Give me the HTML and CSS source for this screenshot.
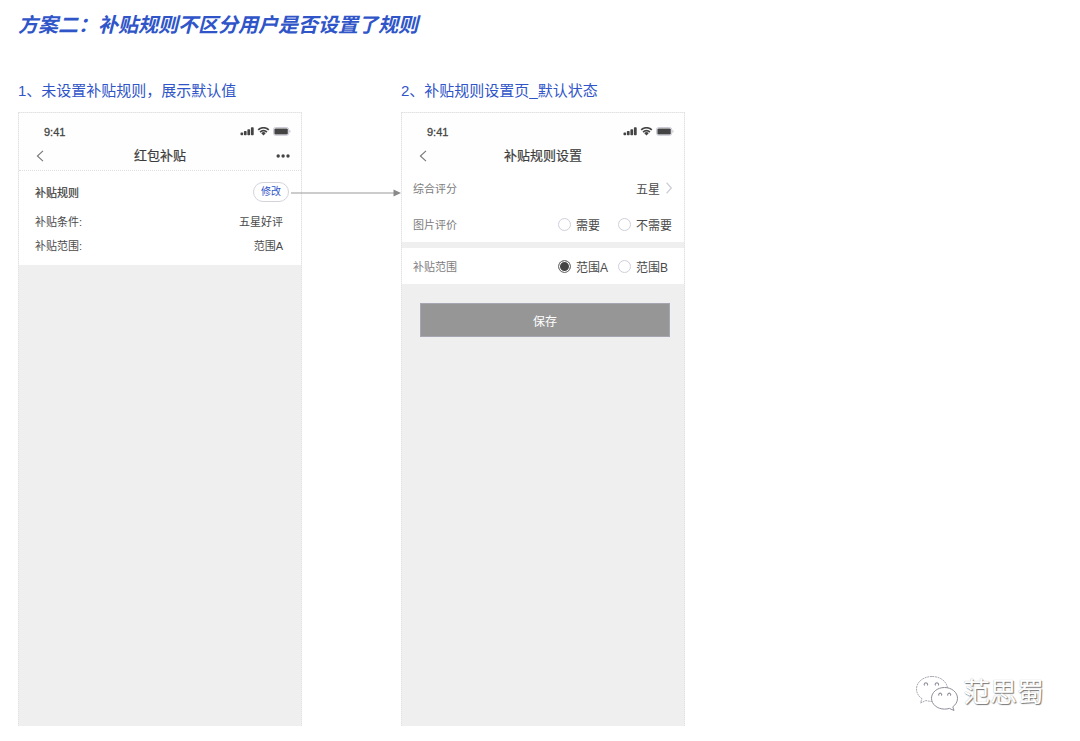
FILE: index.html
```html
<!DOCTYPE html>
<html lang="zh-CN">
<head>
<meta charset="utf-8">
<meta name="viewport" content="width=device-width, initial-scale=1">
<title>方案二</title>
<link rel="stylesheet" href="styles.css">
</head>
<body>
<svg class="sprite" aria-hidden="true">
  <symbol id="status" viewBox="0 0 51 10">
    <g fill="#444">
      <rect x="0.5" y="5.4" width="2.6" height="2.8" rx="0.7"/>
      <rect x="3.9" y="4" width="2.7" height="4.200" rx="0.7"/>
      <rect x="7.4" y="2.300" width="2.7" height="5.900" rx="0.7"/>
      <rect x="10.900" y="0.2" width="2.8" height="8" rx="0.7"/>
      <path d="M23.500 8.500 21.300 6.300a3 3 0 0 1 4.400 0z"/>
      <rect x="34.400" y="1.400" width="13.400" height="6" rx="1.200"/>
    </g>
    <path d="M18.200 2.900a7.600 7.600 0 0 1 10.600 0M20.100 5.100a4.800 4.800 0 0 1 6.800 0" fill="none" stroke="#444" stroke-width="1.700"/>
    <rect x="33.500" y="0.500" width="15.200" height="7.800" rx="2" fill="none" stroke="#c4c4d2" stroke-width="0.900"/>
    <path d="M49.500 3v2.800q1-.4 1-1.400t-1-1.400z" fill="#b5b5c2"/>
  </symbol>
  <symbol id="back" viewBox="0 0 8 12">
    <path d="M7 .8 1.400 6 7 11.200" fill="none" stroke="#777" stroke-width="1.100"/>
  </symbol>
</svg>

<h1 class="title">方案二：补贴规则不区分用户是否设置了规则</h1>

<main class="board">
  <section class="step">
    <h2 class="caption">1、未设置补贴规则，展示默认值</h2>
    <div class="phone">
      <header class="header">
        <div class="status"><span>9:41</span><svg class="status-icons"><use href="#status"/></svg></div>
        <div class="nav">
          <button class="icon-button" aria-label="返回"><svg class="back-icon"><use href="#back"/></svg></button>
          <h3 class="nav-title">红包补贴</h3>
          <button class="icon-button more" aria-label="更多">
            <svg class="more-icon" viewBox="0 0 14 4"><g fill="#444"><circle cx="2.200" cy="2" r="1.700"/><circle cx="7.100" cy="2" r="1.700"/><circle cx="12" cy="2" r="1.700"/></g></svg>
          </button>
        </div>
      </header>
      <div class="summary">
        <div class="summary-head">
          <h4 class="summary-title">补贴规则</h4>
          <div class="edit">
            <button class="pill">修改</button>
            <svg class="arrow" viewBox="0 0 110 8"><path d="M0 4h104" stroke="#999" stroke-width="1.200"/><path d="M102.500 .6 110 4l-7.500 3.400z" fill="#8a8a8a"/></svg>
          </div>
        </div>
        <dl class="facts">
          <div class="fact"><dt>补贴条件:</dt><dd>五星好评</dd></div>
          <div class="fact"><dt>补贴范围:</dt><dd>范围A</dd></div>
        </dl>
      </div>
    </div>
  </section>

  <section class="step">
    <h2 class="caption">2、补贴规则设置页_默认状态</h2>
    <form class="phone">
      <header class="header">
        <div class="status"><span>9:41</span><svg class="status-icons"><use href="#status"/></svg></div>
        <div class="nav">
          <button type="button" class="icon-button" aria-label="返回"><svg class="back-icon"><use href="#back"/></svg></button>
          <h3 class="nav-title">补贴规则设置</h3>
        </div>
      </header>
      <div class="group">
        <div class="row">
          <span class="row-label" id="score">综合评分</span>
          <button type="button" class="picker" aria-describedby="score">五星
            <svg class="picker-icon" viewBox="0 0 6 12"><path d="M.6.8 5.300 6 .6 11.200" fill="none" stroke="#cfcfdb" stroke-width="1.300"/></svg>
          </button>
        </div>
        <div class="row" role="radiogroup" aria-labelledby="photo">
          <span class="row-label" id="photo">图片评价</span>
          <div class="options">
            <label class="option"><input class="radio" type="radio" name="photo">需要</label>
            <label class="option"><input class="radio" type="radio" name="photo">不需要</label>
          </div>
        </div>
      </div>
      <div class="group">
        <div class="row" role="radiogroup" aria-labelledby="range">
          <span class="row-label" id="range">补贴范围</span>
          <div class="options">
            <label class="option"><input class="radio" type="radio" name="range" checked>范围A</label>
            <label class="option"><input class="radio" type="radio" name="range">范围B</label>
          </div>
        </div>
      </div>
      <button type="button" class="save">保存</button>
    </form>
  </section>
</main>

<footer class="watermark">
  <svg class="wechat" viewBox="0 0 44 36">
    <g fill="#fff" stroke="#a9a9b4" stroke-width="1">
      <path d="M17 1.500C8.300 1.500 1.500 7 1.500 14c0 4 2 7.300 5.500 9.700L5.500 28l5.400-2.500c2 .6 4 .9 6.100.9 8.700 0 15.500-5.400 15.500-12.400S25.700 1.500 17 1.500z" stroke-dasharray="2 .7"/>
      <path d="M29.500 12.500c-7.200 0-13 4.800-13 10.800s5.800 10.800 13 10.800c1.700 0 3.400-.2 4.900-.7l4.600 2.100-1.200-3.700c2.900-2 4.700-5 4.700-8.500 0-6-5.800-10.800-13-10.800z" stroke="#8f8f9b"/>
    </g>
    <g fill="none" stroke="#8f8f9b" stroke-width="1.100">
      <path d="M9.500 10.500a1.700 1.700 0 1 1 2.800 0M20.500 10.500a1.700 1.700 0 1 1 2.800 0M24 20.600a1.500 1.500 0 1 1 2.400 0M33 20.600a1.500 1.500 0 1 1 2.400 0"/>
    </g>
  </svg>
  <span class="author">范思蜀</span>
</footer>
</body>
</html>
```

FILE: styles.css
```css
* {
  box-sizing: border-box;
}

body {
  display: flex;
  flex-direction: column;
  position: relative;
  min-height: 100vh;
  margin: 0;
  padding: 10px 18px 15px;
  background: #fff;
  color: #4a4a4a;
  font-family: "Liberation Sans", "Noto Sans CJK SC", sans-serif;
  font-size: 11px;
}

h1, h2, h3, h4, dl, dd {
  margin: 0;
}

button {
  padding: 0;
  border: 0;
  background: none;
  color: inherit;
  font: inherit;
  cursor: pointer;
}

svg {
  display: block;
}

.sprite {
  position: absolute;
  width: 0;
  height: 0;
}

.title {
  margin-bottom: 43px;
  color: #2f55c8;
  font-family: "Noto Sans CJK SC", sans-serif;
  font-size: 20px;
  font-style: italic;
  font-weight: 700;
  line-height: 28px;
}

.board {
  display: flex;
  flex: 1;
  gap: 99px;
}

.step {
  display: flex;
  flex: 0 1 284px;
  flex-direction: column;
}

.caption {
  margin-bottom: 11px;
  color: #2f55c8;
  font-size: 15px;
  font-weight: 400;
  line-height: 20px;
  white-space: nowrap;
}

.phone {
  flex: 1;
  border: 1px dotted #e2e2e2;
  border-bottom: 0;
  background: #efefef;
}

.header {
  padding-top: 9px;
  background: #fefefe;
}

.status {
  display: flex;
  align-items: center;
  justify-content: space-between;
  padding: 0 10px 0 25px;
  color: #444;
  line-height: 20px;
  -webkit-text-stroke: 0.3px #444;
}

.status-icons {
  width: 51px;
  height: 10px;
}

.nav {
  display: grid;
  grid-template-columns: 1fr auto 1fr;
  align-items: center;
  height: 28px;
  padding: 0 11px 0 17px;
}

.icon-button {
  justify-self: start;
}

.more {
  justify-self: end;
}

.back-icon {
  width: 8px;
  height: 12px;
}

.more-icon {
  width: 14px;
  height: 4px;
}

.nav-title {
  padding-right: 6px;
  color: #3c3c3c;
  font-size: 13px;
  font-weight: 400;
  line-height: 20px;
  -webkit-text-stroke: 0.2px #3c3c3c;
}

.summary {
  padding: 11px 18px 7px 16px;
  border-top: 1px dotted #dedede;
  background: #fff;
}

.summary-head {
  display: flex;
  align-items: center;
  justify-content: space-between;
  margin-right: -6px;
}

.summary-title {
  color: #3c3c3c;
  font-size: 11px;
  font-weight: 400;
  -webkit-text-stroke: 0.2px #3c3c3c;
}

.edit {
  position: relative;
}

.pill {
  display: block;
  height: 20px;
  padding: 0 7px;
  border: 1px solid #d3d3dc;
  border-radius: 10px;
  background: #fff;
  color: #2f55c8;
  font-size: 10px;
  line-height: 18px;
}

.arrow {
  position: absolute;
  top: 7px;
  left: calc(100% + 2px);
  width: 110px;
  height: 8px;
}

.facts {
  margin-top: 8px;
}

.fact {
  display: flex;
  justify-content: space-between;
  line-height: 24px;
}

.group {
  background: #fff;
}

.group + .group {
  margin-top: 6px;
}

.row {
  display: flex;
  align-items: center;
  justify-content: space-between;
  height: 36px;
  padding: 0 12px 0 11px;
}

.row-label {
  color: #7c7c7c;
}

.picker {
  display: flex;
  align-items: center;
  gap: 6px;
  font-size: 12px;
}

.picker-icon {
  width: 6px;
  height: 12px;
}

.options {
  display: grid;
  grid-template-columns: 60px 54px;
  font-size: 12px;
}

.option {
  display: flex;
  align-items: center;
  gap: 5px;
  white-space: nowrap;
}

.radio {
  flex: none;
  width: 13px;
  height: 13px;
  margin: 0;
  border: 1px solid #cfcfdb;
  border-radius: 50%;
  appearance: none;
  background: #fff;
}

.radio:checked {
  border-color: #777;
  background: #444;
  box-shadow: inset 0 0 0 1px #fff;
}

.save {
  display: block;
  width: calc(100% - 32px);
  height: 34px;
  margin: 19px 14px 0 18px;
  border: 1px solid #a6a6b2;
  background: #969696;
  color: #fff;
  font-size: 12px;
}

.watermark {
  display: flex;
  position: absolute;
  right: 36px;
  bottom: 30px;
  align-items: center;
  gap: 4px;
}

.wechat {
  width: 44px;
  height: 36px;
}

.author {
  color: #fff;
  font-size: 27px;
  line-height: 36px;
  text-shadow: 1px 1px 1px #777, 0 0 1px #aaa;
}
```
